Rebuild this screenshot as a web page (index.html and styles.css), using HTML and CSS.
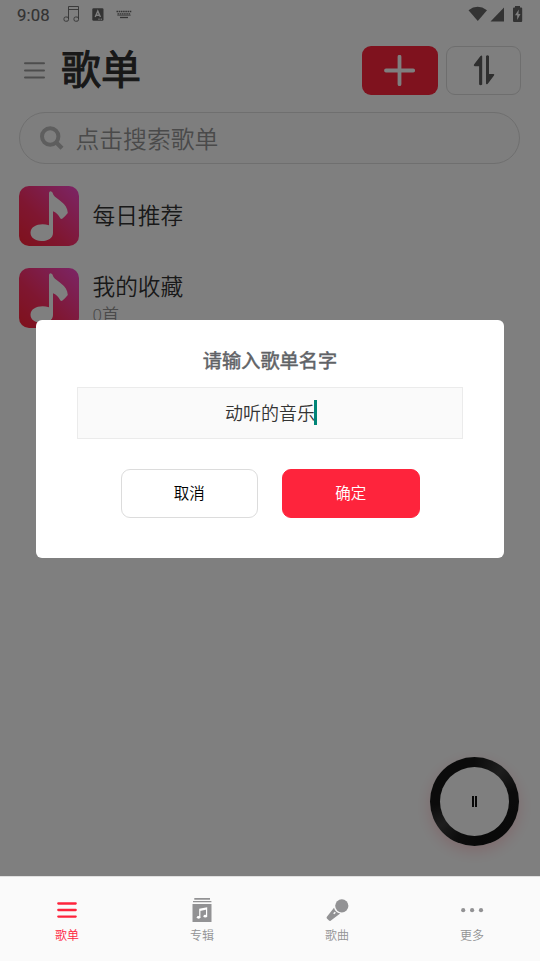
FILE: index.html
```html
<!DOCTYPE html>
<html lang="zh-CN">
<head>
<meta charset="utf-8">
<title>歌单</title>
<link rel="stylesheet" href="styles.css">
</head>
<body>
<div class="app">
  <main class="page">
    <div class="status">
      <span class="clock">9:08</span>
      <svg class="st-note" width="18" height="18" viewBox="0 0 18 18" fill="none" stroke="currentColor" stroke-width=".9"><path d="M5.5 14V1.5H15.5V14M5.5 4.5H15.5"/><rect x="1" y="12" width="4.5" height="4.2" rx="1.5"/><rect x="11" y="12" width="4.5" height="4.2" rx="1.5"/></svg>
      <svg class="st-a" width="12" height="13" viewBox="0 0 12 13"><rect x=".3" y=".2" width="11.2" height="12.5" rx="1.2" fill="currentColor"/><path d="M3.2 9L5.8 3L8.4 9M4.2 7.2H7.4M6.5 11.3h1M8.7 11.3h1" fill="none" stroke="#fff" stroke-width="1.4"/></svg>
      <svg class="st-kb" width="16" height="9" viewBox="0 0 16 9" fill="none" stroke="currentColor" stroke-width="1.3"><path d="M.5 1.5H15.5M1.5 3.8H14.5" stroke-dasharray="1.6 .6"/><path d="M1.3 5.2H14.7" stroke-width=".8"/><path d="M4 7.5H12"/></svg>
      <svg class="st-right" width="56" height="18" viewBox="0 0 56 18" fill="currentColor"><path d="M.5 5.2Q9.5-1.5 19 5.2L9.8 16Z"/><path d="M22.5 16.5L36 2.5V16.5Z"/><path d="M47 2.5V1h5v1.5h1.2q1 0 1 1V16q0 1-1 1H46q-1 0-1-1V3.5q0-1 1-1Z"/><path d="M50.8 4.5L47 10.2h2.2V15L52.5 8.9H50.4Z" fill="#fff"/></svg>
    </div>
    <header class="header">
      <svg class="menu" width="21" height="17" viewBox="0 0 21 17" stroke="currentColor" stroke-width="2" stroke-linecap="round"><path d="M1 1.2H20M1 8.5H20M1 15.4H20"/></svg>
      <h1 class="title">歌单</h1>
      <button class="tool add" aria-label="新建"><svg width="32" height="32" viewBox="0 0 32 32" stroke="#fff" stroke-width="3.8" stroke-linecap="round"><path d="M15.5 1.8V29.2M2 15.5H29.2"/></svg></button>
      <button class="tool sort" aria-label="排序"><svg width="22" height="31" viewBox="0 0 22 31" fill="currentColor"><path d="M9.2 1.2V29.5Q7.7 31 6.1 29.5V11.2H1.7Q.2 11 1 9.6L7.5 1Q9 0 9.2 1.2Z"/><path d="M13 28.6V1Q14.4-.4 16 1V19H20.4Q21.8 19.3 21 20.6L14.8 28.8Q13.3 30 13 28.6Z"/></svg></button>
    </header>
    <div class="search">
      <svg width="25" height="25" viewBox="0 0 25 25" fill="none" stroke="currentColor" stroke-width="4"><circle cx="10.2" cy="10.5" r="8.2"/><path d="M16 16.3L22 22.3" stroke-width="4.3"/></svg>
      <span>点击搜索歌单</span>
    </div>
    <ul class="lists">
      <li class="row">
        <span class="cover"><svg width="60" height="60" viewBox="0 0 60 60" fill="#fff"><path d="M30 7Q30 5.3 31.8 5.3Q33.5 5.5 34.5 9C37.5 13.5 48.5 17 48.8 27Q46 30.5 43.5 32.6Q41.5 33.5 40.8 31.5Q38.5 27 34 25.3V47C34 52.5 28.5 55.2 22.3 55C16 55 11.5 51.5 11.5 46.8C11.7 39.5 21 36.8 30 39.2Z"/></svg></span>
        <div class="info"><div class="name">每日推荐</div></div>
      </li>
      <li class="row">
        <span class="cover"><svg width="60" height="60" viewBox="0 0 60 60" fill="#fff"><path d="M30 7Q30 5.3 31.8 5.3Q33.5 5.5 34.5 9C37.5 13.5 48.5 17 48.8 27Q46 30.5 43.5 32.6Q41.5 33.5 40.8 31.5Q38.5 27 34 25.3V47C34 52.5 28.5 55.2 22.3 55C16 55 11.5 51.5 11.5 46.8C11.7 39.5 21 36.8 30 39.2Z"/></svg></span>
        <div class="info pair"><div class="name">我的收藏</div><div class="count">0首</div></div>
      </li>
    </ul>
    <div class="player"><div class="disc"><i></i><i></i></div></div>
  </main>
  <nav class="nav">
    <a class="tab active"><svg width="26" height="26" viewBox="0 0 26 26" stroke="currentColor" stroke-width="2.3" stroke-linecap="round"><path d="M4.3 6.5H21.7M4.3 13H21.7M4.3 19.6H21.7"/></svg><span>歌单</span></a>
    <a class="tab"><svg width="26" height="26" viewBox="0 0 26 26" fill="currentColor"><path d="M5.3 1.1H21v1.6H5.3ZM4 3.9H22.4v1.4H4ZM3.5 7H22.5V25H3.5Z"/><path d="M10.8 20.2V12.2L17.6 11V19M10.8 13.4L17.6 12" fill="none" stroke="#fff" stroke-width="1.2"/><ellipse cx="9.6" cy="20.3" rx="1.8" ry="1.4" fill="#fff"/><ellipse cx="16.3" cy="19.2" rx="1.8" ry="1.4" fill="#fff"/></svg><span>专辑</span></a>
    <a class="tab"><svg width="26" height="26" viewBox="0 0 26 26" fill="currentColor"><circle cx="17.8" cy="8.8" r="6.6"/><path d="M10 10.8Q11.2 15.3 16.2 16.6L6.6 23.7Q5.8 24.3 5 23.5L2.9 21.4Q2.2 20.5 2.9 19.7Z"/><path d="M9.7 16.8L11.3 15.2" stroke="#fafafa" stroke-width="1.5"/></svg><span>歌曲</span></a>
    <a class="tab"><svg width="26" height="26" viewBox="0 0 26 26" fill="currentColor"><circle cx="4.2" cy="13.2" r="2.1"/><circle cx="13.1" cy="13.2" r="2.1"/><circle cx="22" cy="13.2" r="2.1"/></svg><span>更多</span></a>
  </nav>
  <div class="mask"></div>
  <section class="dialog">
    <h2>请输入歌单名字</h2>
    <div class="field"><span>动听的音乐</span><i class="caret"></i></div>
    <div class="actions"><button class="btn">取消</button><button class="btn ok">确定</button></div>
  </section>
</div>
</body>
</html>
```
FILE: styles.css
```css
* { box-sizing: border-box; margin: 0; padding: 0; }
body { font-family: Roboto, "Noto Sans CJK SC", sans-serif; font-weight: 350; background: #fff; }
svg { display: block; flex: none; }
button { font: inherit; }
.app { position: relative; width: 540px; height: 961px; overflow: hidden; display: flex; flex-direction: column; }
.page { flex: 1; min-height: 0; background: #fff; }

.status { height: 30px; display: flex; align-items: center; color: #666; padding: 0 16px 0 17px; }
.clock { font-size: 16.8px; line-height: 30px; font-weight: 400; letter-spacing: .1px; width: 46px; -webkit-text-stroke: .15px; }
.st-note { margin-top: -2px; }
.st-a { margin: -2px 0 0 11px; }
.st-kb { margin: -1px 0 0 12px; }
.st-right { margin: -2px 0 0 auto; }

.header { height: 82px; padding: 15.5px 19px 0 24px; display: flex; align-items: flex-start; }
.menu { margin-top: 16.5px; color: #9a9a9a; }
.title { margin: -5px auto 0 16px; font-size: 40px; line-height: 60px; font-weight: 400; -webkit-text-stroke: 1px; color: #303030; }
.tool { width: 75px; height: 49.5px; border-radius: 9px; display: flex; align-items: center; justify-content: center; border: 1px solid #dcdcdc; background: #fff; color: #5c5c5c; }
.add { width: 76px; border: 0; background: #fe243c; margin-right: 8px; padding-top: 1px; }

.search { width: 501px; height: 52px; margin-left: 19px; border: 1px solid #dedede; border-radius: 26px; background: #fcfcfc; padding-left: 20px; display: flex; align-items: center; gap: 10.5px; font-size: 23.8px; line-height: 50px; color: #949494; }
.search svg { color: #bcbcbc; }
.search span { padding-top: 3px; }

.lists { list-style: none; padding: 22px 19px 0; display: grid; gap: 22px; }
.row { height: 60px; display: flex; align-items: center; gap: 13.5px; }
.cover { width: 60px; height: 60px; border-radius: 10px; overflow: hidden; background: linear-gradient(45deg, #fe243c 5%, #ff2d62 40%, #f84bce 100%); }
.name { font-size: 22.7px; line-height: 34px; color: #333; padding-top: 2px; }
.pair .name { padding-top: 0; line-height: 33px; }
.count { font-size: 17px; line-height: 22px; color: #949494; }

.player { position: absolute; left: 430px; top: 757px; width: 89px; height: 89px; border-radius: 50%; padding: 10px; background: conic-gradient(#171717, #3c3c3c 40deg, #171717 75deg, #111 170deg, #1a1a1a 205deg, #3c3c3c 235deg, #171717 265deg, #171717); box-shadow: 0 5px 15px rgba(254, 36, 60, .2); }
.disc { width: 69px; height: 69px; border-radius: 50%; background: #fff; display: flex; align-items: center; justify-content: center; gap: 1px; }
.disc i { width: 2px; height: 11px; background: #111; }

.nav { position: relative; z-index: 2; height: 85px; background: #fafafa; border-top: 1px solid #e0e0e0; display: grid; grid-template-columns: repeat(4, 1fr); }
.tab { display: flex; flex-direction: column; align-items: center; padding: 20px 1px 0 0; color: #929294; font-size: 12px; line-height: 18px; gap: 3.5px; }
.active { color: #fe243c; }

.mask { position: absolute; inset: 0; background: rgba(0, 0, 0, .5); }
.dialog { position: absolute; z-index: 3; left: 36px; top: 319.5px; width: 468px; height: 238px; border-radius: 6px; background: #fff; padding: 28px 41px 0; display: flex; flex-direction: column; }
.dialog h2 { font-size: 19.2px; line-height: 28px; text-align: center; color: #606266; font-weight: 400; -webkit-text-stroke: .5px; }
.field { margin-top: 11.5px; height: 52px; border: 1px solid #ebebeb; background: #fafafa; display: flex; align-items: center; justify-content: center; font-size: 18px; color: #333; padding-bottom: 2px; }
.caret { width: 3px; height: 25px; background: #008577; margin: 0 -2px 0 -1px; }
.actions { margin-top: 29.5px; display: flex; justify-content: center; gap: 24px; }
.btn { width: 137.5px; height: 49.5px; border: 1.5px solid #dcdcdc; border-radius: 9px; background: #fff; color: #000; font-size: 15.5px; padding-bottom: 2px; }
.ok { background: #fe243c; border-color: #fe243c; color: #fff; }
```
